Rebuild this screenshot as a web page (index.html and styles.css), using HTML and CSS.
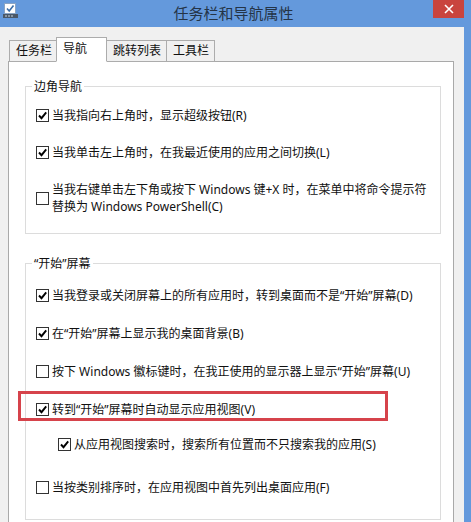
FILE: index.html
```html
<!DOCTYPE html>
<html>
<head>
	<meta charset="utf-8">
	<title>任务栏和导航属性</title>
	<link rel="stylesheet" href="styles.css">
</head>
<body>
	<div class="window">
		<div class="titlebar">
			<svg class="app-icon" width="15" height="15" viewBox="0 0 15 15">
				<rect x="1.5" y="0.5" width="11" height="10" fill="#fff" stroke="#8aa4c4"/>
				<polyline points="4,5.5 6.2,8 10.5,2.5" fill="none" stroke="#3c6ea8" stroke-width="1.6"/>
				<rect x="0" y="11" width="15" height="4" fill="#4a5868"/>
				<rect x="2" y="12.5" width="2" height="1" fill="#c8d4e0"/>
				<rect x="5" y="12.5" width="2" height="1" fill="#c8d4e0"/>
				<rect x="8" y="12.5" width="2" height="1" fill="#c8d4e0"/>
			</svg>
			<div class="title">任务栏和导航属性</div>
			<div class="close">
				<svg width="10" height="10" viewBox="0 0 10 10">
					<path d="M1 1 L9 9 M9 1 L1 9" stroke="#fff" stroke-width="1.6"/>
				</svg>
			</div>
		</div>

		<div class="client">
			<ul class="tabs">
				<li class="tab">任务栏</li>
				<li class="tab on">导航</li>
				<li class="tab">跳转列表</li>
				<li class="tab">工具栏</li>
			</ul>

			<div class="panel">
				<fieldset class="group corner">
					<legend>边角导航</legend>
					<div class="opt"><span class="box on"><svg viewBox="0 0 11 11"><polyline points="2,5.5 4.5,8.2 9.2,2.4"/></svg></span><span class="txt">当我指向右上角时，显示超级按钮(R)</span></div>
					<div class="opt"><span class="box on"><svg viewBox="0 0 11 11"><polyline points="2,5.5 4.5,8.2 9.2,2.4"/></svg></span><span class="txt">当我单击左上角时，在我最近使用的应用之间切换(L)</span></div>
					<div class="opt"><span class="box"></span><span class="txt">当我右键单击左下角或按下 Windows 键+X 时，在菜单中将命令提示符<br>替换为 Windows PowerShell(C)</span></div>
				</fieldset>

				<fieldset class="group start">
					<legend>“开始”屏幕</legend>
					<div class="opt"><span class="box on"><svg viewBox="0 0 11 11"><polyline points="2,5.5 4.5,8.2 9.2,2.4"/></svg></span><span class="txt">当我登录或关闭屏幕上的所有应用时，转到桌面而不是“开始”屏幕(D)</span></div>
					<div class="opt"><span class="box on"><svg viewBox="0 0 11 11"><polyline points="2,5.5 4.5,8.2 9.2,2.4"/></svg></span><span class="txt">在“开始”屏幕上显示我的桌面背景(B)</span></div>
					<div class="opt"><span class="box"></span><span class="txt">按下 Windows 徽标键时，在我正使用的显示器上显示“开始”屏幕(U)</span></div>
					<div class="opt marked"><span class="box on"><svg viewBox="0 0 11 11"><polyline points="2,5.5 4.5,8.2 9.2,2.4"/></svg></span><span class="txt">转到“开始”屏幕时自动显示应用视图(V)</span><span class="mark"></span></div>
					<div class="opt sub"><span class="box on"><svg viewBox="0 0 11 11"><polyline points="2,5.5 4.5,8.2 9.2,2.4"/></svg></span><span class="txt">从应用视图搜索时，搜索所有位置而不只搜索我的应用(S)</span></div>
					<div class="opt last"><span class="box"></span><span class="txt">当按类别排序时，在应用视图中首先列出桌面应用(F)</span></div>
				</fieldset>
			</div>
		</div>
	</div>
</body>
</html>
```

FILE: styles.css
```css
* {padding: 0; margin: 0; box-sizing: border-box;}
body {width: 471px; height: 522px; overflow: hidden; font-family: "Noto Sans", "Noto Sans CJK SC", sans-serif; font-size: 12px; color: #111;}

.window {height: 522px; background: #6499dc; display: flex; flex-direction: column;}

.titlebar {height: 27px; display: grid; grid-template-columns: 1fr auto 1fr; align-items: start; padding: 0 7px 0 3px;}
.app-icon {margin-top: 3px;}
.title {font-family: "Noto Sans CJK SC", sans-serif; font-size: 15px; line-height: 27px; color: #243447; margin-top: -1px;}
.close {justify-self: end; width: 31px; height: 18px; background: #c9443e; display: flex; align-items: center; justify-content: center;}

.client {flex: 1; margin-right: 7px; background: #f0f0f0; padding: 10px 10px 0 8px; display: flex; flex-direction: column;}

/* 选项卡 */
.tabs {display: flex; align-items: flex-end; list-style: none; margin: 0 0 -1px 1px; position: relative; z-index: 1;}
.tab {height: 22px; line-height: 20px; padding: 0 5px 0 6px; border: 1px solid #acacac; background: #f0f0f0; margin-left: -1px;}
.tab:first-child {margin-left: 0; padding-right: 4px;}
.tab.on {height: 25px; line-height: 21px; padding: 0 19px 0 6px; background: #fff; border-bottom-color: #fff; position: relative; z-index: 2;}

.panel {flex: 1; background: #fff; border: 1px solid #a9a9a9; border-bottom: none; padding: 16px 12px 0 16px;}

/* 分组框 */
.group {border: 1px solid #dcdcdc; padding: 12px 10px 18px 10px; display: flex; flex-direction: column; gap: 20px;}
.group legend {margin-left: -4px; padding: 0 2px; line-height: 17px;}
.group.start {margin-top: 21px; padding-top: 15px; gap: 21px; padding-bottom: 23px;}

.opt {display: flex; align-items: center; line-height: 17px; position: relative;}
.opt.sub {margin-left: 22px; margin-top: -3px;}
.opt.last {margin-top: 5px;}
.txt {margin-left: 3px; white-space: nowrap;}

.box {width: 13px; height: 13px; border: 1px solid #333; background: #fff; flex: none; display: flex;}
.box svg {width: 11px; height: 11px;}
.box polyline {fill: none; stroke: #000; stroke-width: 1.9;}

/* 红框标注 */
.mark {position: absolute; left: -18px; top: -10px; width: 370px; height: 30px; border: 3px solid #d6434b;}
```
